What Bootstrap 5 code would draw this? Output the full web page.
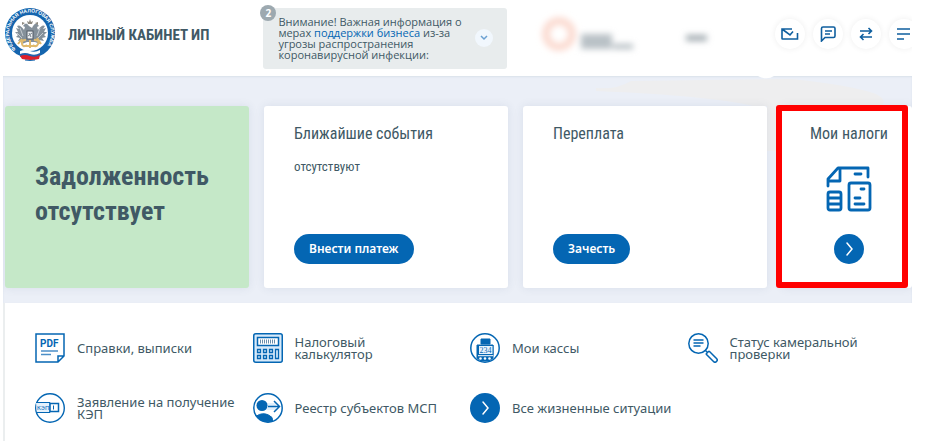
<!DOCTYPE html>
<html lang="ru">
<head>
<meta charset="utf-8">
<meta name="viewport" content="width=device-width, initial-scale=1">
<title>Личный кабинет ИП</title>
<link href="https://cdn.jsdelivr.net/npm/bootstrap@5.3.0/dist/css/bootstrap.min.css" rel="stylesheet">
<style>
  :root { --brand: #0466b3; --ink: #405965; --din: "Liberation Sans Narrow", "Roboto Condensed", Roboto, sans-serif; }
  body { font-family: "Noto Sans", "Open Sans", sans-serif; font-size: 13px; line-height: 12px; color: var(--ink); background: #fff; }
  svg { display: block; flex-shrink: 0; }
  .page-wrap { margin: 0 30px 0 3px; overflow-x: clip; }
  .top-bar { height: 76px; padding: 8px 0 0 2px; }
  .brand-link { color: var(--ink); font: bold 15px/20px var(--din); height: 53px; gap: 13px; }
  .notice { width: 244px; margin-left: 54px; padding: 8px 14px 9px 15px; background: #e8eced; border-radius: 3px; font-family: "Open Sans", sans-serif; font-size: 11px; line-height: 11px; }
  .notice a { color: var(--brand); }
  .notice-count { left: -3px; top: -3px; width: 16px; height: 16px; background: #9da9b0; font-size: 10px; line-height: 16px; }
  .notice-toggle { width: 18px; height: 18px; background: #f1f7fd; }
  .account { margin-left: 24px; }
  .tool-list { gap: 8px; margin-right: -7px; padding-top: 11px; }
  .tool-btn { width: 30px; height: 30px; background: #fff; box-shadow: 0 0 6px #00000012; }
  .summary { background: #ebeff7; padding: 30px 0 15px 2px; box-shadow: inset 0 1px 2px #d9e1ea; }
  .backdrop { left: 0; top: 0; width: 100%; height: 100%; }
  .summary-grid { grid-template-columns: 244fr 244fr 244fr 130fr; gap: 15px; }
  .tile { min-height: 182px; border: 0; border-radius: 3px; padding: 18px 30px 24px; color: var(--ink); box-shadow: 0 0 10px #3c50781a; }
  .tile h2 { font: 16px/20px var(--din); margin: 0; }
  .tile p { font: 13px/18px var(--din); margin: 14px 0 0; }
  .tile-debt { background: #c5e8c8; }
  .tile-debt h2 { font: bold 26px/35px var(--din); }
  .btn-pill { background: var(--brand); color: #fff; border: 0; border-radius: 15px; font-size: 12px; font-weight: 600; line-height: 18px; padding: 6px 15px; }
  .btn-pill:hover { background: #03569a; color: #fff; }
  .tile-tax { padding: 18px 0 24px 4px; }
  .tax-frame { left: -6px; right: 4px; top: -1px; bottom: 0; border: 6px solid #f00; border-radius: 3px; pointer-events: none; }
  .services { border-left: 2px solid #ebeeef; padding: 30px 7px 18px 30px; }
  .services ul { grid-template-columns: repeat(4, 1fr); row-gap: 30px; }
  .services a { color: var(--ink); gap: 12px; min-height: 30px; padding-right: 8px; }
</style>
<script src="https://cdn.jsdelivr.net/npm/bootstrap@5.3.0/dist/js/bootstrap.bundle.min.js"></script>
</head>
<body>
<div class="page-wrap">
  <header class="top-bar d-flex align-items-start">
    <a href="#" class="brand-link d-flex align-items-center text-decoration-none text-nowrap">
      <svg width="50" height="53" viewBox="0 0 50 53" role="img" aria-label="Федеральная налоговая служба">
        <defs><path id="ring" d="M11 41A21 21 0 1 1 41 39"/></defs>
        <circle cx="25" cy="25" r="25" fill="#1565ae"/>
        <circle cx="25" cy="25" r="18" fill="#fff"/>
        <text font-family="Liberation Sans, sans-serif" font-weight="700" font-size="5" fill="#fff"><textPath href="#ring">ФЕДЕРАЛЬНАЯ НАЛОГОВАЯ СЛУЖБА</textPath></text>
        <g fill="#84909a">
          <path d="M24 18q-3-5-6 0l2 1-1 3q-4-6-7-4l2 3-3-1 2 4-3 0 3 3-2 2 4 1-2 3 5-1-1 4 5-2h8l5 2-1-4 5 1-2-3 4-1-2-2 3-3-3 0 2-4-3 1 2-3q-3-2-7 4l-1-3 2-1q-3-5-6 0l-1 2z"/>
        </g>
        <path d="M15 20l3 8M12 25l5 5M35 20l-3 8M38 25l-5 5" stroke="#c4cbd1"/>
        <path d="M23 16l-1-3 2 1 1-3 1 3 2-1-1 3zM17 17l0-3 3 1zM33 17v-3l-3 1z" fill="#8e8a80"/>
        <rect x="22" y="23" width="6" height="8" fill="#edf0f3" stroke="#4f5965"/>
        <path d="M23 28l4-3M24 25l2 4" stroke="#78838d"/>
        <path d="M21 32q-5 0-4 4t5 1M29 32q6 0 4 4t-5 1M19 38h12M25 32v8M32 30l4 6M17 31l-4 5" fill="none" stroke="#e0ba6c" stroke-width="2"/>
        <path d="M15 43q5-2 10 0t10-1v5q-5 2-10 0t-10 1z" fill="#fff"/>
        <path d="M15 46q5-2 10 0t10-1v3q-5 2-10 0t-10 1z" fill="#2463ad"/>
        <path d="M15 48q5-2 10 0t10-1l-1 4q-8 2-17 0z" fill="#df202b"/>
        <path d="M20 52q5 1 10 0" stroke="#1565ae" fill="none"/>
      </svg>
      <span>ЛИЧНЫЙ КАБИНЕТ ИП</span>
    </a>
    <section class="notice position-relative d-flex align-items-center justify-content-between flex-shrink-0">
      <span class="notice-count position-absolute rounded-circle text-white text-center fw-bold">2</span>
      <div class="text-nowrap">Внимание! Важная информация о<br>мерах <a href="#" class="text-decoration-none">поддержки бизнеса</a> из-за<br>угрозы распространения<br>коронавирусной инфекции:</div>
      <button type="button" class="notice-toggle btn p-0 border-0 rounded-circle d-flex align-items-center justify-content-center flex-shrink-0" aria-label="Развернуть">
        <svg width="8" height="6" viewBox="0 0 8 6" fill="none" stroke="#6aa0d2" stroke-width="1.500"><path d="M1 1l3 3 3-3"/></svg>
      </button>
    </section>
    <svg class="account" width="190" height="55" viewBox="0 0 190 55" aria-hidden="true">
      <defs><filter id="soft" filterUnits="userSpaceOnUse" x="0" y="0" width="190" height="55"><feGaussianBlur stdDeviation="3"/></filter></defs>
      <g filter="url(#soft)">
        <circle cx="28" cy="26" r="13" fill="none" stroke="#fbdcd2" stroke-width="8"/>
        <path d="M50 26h31v15H50z" fill="#b9c1c6"/><path d="M82 36h20v5H82z" fill="#b4bcc1"/><path d="M155 27h21v6h-21z" fill="#a2abb1"/>
      </g>
    </svg>
    <nav class="tool-list d-flex ms-auto">
      <button type="button" class="tool-btn btn p-0 border-0 rounded-circle d-flex align-items-center justify-content-center flex-shrink-0" aria-label="Сообщения">
        <svg width="18" height="14" viewBox="0 0 18 14" fill="none" stroke="#0f5f9f" stroke-width="1.600"><path d="M11 2H1v9.500q0 .5.500.500h15V6M1 2l8 6 3-3.500"/></svg>
      </button>
      <button type="button" class="tool-btn btn p-0 border-0 rounded-circle d-flex align-items-center justify-content-center flex-shrink-0" aria-label="Обращения">
        <svg width="16" height="16" viewBox="0 0 16 16" fill="none" stroke="#0f5f9f" stroke-width="1.600"><path d="M1.500 15V2.500q0-1.500 1.500-1.500h10.500q1.500 0 1.500 1.500V10q0 1.500-1.500 1.500H5zM5 5h7M5 8h5"/></svg>
      </button>
      <button type="button" class="tool-btn btn p-0 border-0 rounded-circle d-flex align-items-center justify-content-center flex-shrink-0" aria-label="Переключить">
        <svg width="14" height="14" viewBox="0 0 14 14" fill="none" stroke="#0f5f9f" stroke-width="1.600"><path d="M1 4h11M9.500 1l3 3-3 3M13 10H2M4.500 7l-3 3 3 3"/></svg>
      </button>
      <button type="button" class="tool-btn btn p-0 border-0 rounded-circle d-flex align-items-center justify-content-center flex-shrink-0" aria-label="Меню">
        <svg width="18" height="12" viewBox="0 0 18 12" fill="none" stroke="#0f5f9f" stroke-width="1.600"><path d="M2 1h13M2 6h13M2 11h7"/></svg>
      </button>
    </nav>
  </header>

  <main>
    <section class="summary position-relative">
      <svg class="backdrop position-absolute" viewBox="0 0 909 227" preserveAspectRatio="none" aria-hidden="true">
        <path d="M593 12q20 2 35-7l160-2q60 6 85 15 12 6 5 12H750q-40-10-157-15z" fill="#eeeeef"/><path d="M764 30h10v45h-10z" fill="#eeeeef"/><path d="M755 0h16q-6 4-14 1z" fill="#fff"/>
      </svg>
      <div class="summary-grid d-grid position-relative">
        <article class="tile tile-debt card justify-content-center">
          <h2>Задолженность<br>отсутствует</h2>
        </article>
        <article class="tile card align-items-start">
          <h2>Ближайшие события</h2>
          <p>отсутствуют</p>
          <button type="button" class="btn btn-pill mt-auto">Внести платеж</button>
        </article>
        <article class="tile card align-items-start">
          <h2>Переплата</h2>
          <button type="button" class="btn btn-pill mt-auto">Зачесть</button>
        </article>
        <article class="tile tile-tax card align-items-center justify-content-between">
          <h2>Мои налоги</h2>
          <svg width="46" height="46" viewBox="0 0 46 46" fill="none" stroke="#0466b3" stroke-width="2.800" stroke-linecap="round" stroke-linejoin="round"><path d="M2 20v-7L12 2h30v9M14 2v13H3M29 8h6M4 26h9q2 0 2 2v14q0 2-2 2H4q-2 0-2-2V28q0-2 2-2zM2 32h13M2 38h13M25 17h17q2 0 2 2v23q0 2-2 2H25q-2 0-2-2V19q0-2 2-2zM35 23h3M29 32h5M29 38h9"/></svg>
          <a href="#" aria-label="Мои налоги"><svg width="30" height="30" viewBox="0 0 30 30" fill="none"><circle cx="15" cy="15" r="15" fill="#0466b3"/><path d="M13 9l5 6-5 6" stroke="#fff" stroke-width="1.500" stroke-linecap="round"/></svg></a>
          <span class="tax-frame position-absolute"></span>
        </article>
      </div>
    </section>

    <nav class="services" aria-label="Жизненные ситуации">
      <ul class="list-unstyled d-grid mb-0">
        <li><a href="#" class="d-flex align-items-center text-decoration-none">
          <svg width="30" height="30" viewBox="0 0 30 30" fill="none" stroke="#0466b3"><path d="M1 1h28v22l-6 6H1zM29 23h-6v6" stroke-width="1.500"/><text x="5" y="14" font-family="Roboto, sans-serif" font-weight="700" font-size="10" fill="#0466b3" stroke="none">PDF</text><path d="M6 18h17M6 21.500h10" stroke="#4c8fc7" stroke-width="1.500"/></svg>
          <span>Справки, выписки</span></a></li>
        <li><a href="#" class="d-flex align-items-center text-decoration-none">
          <svg width="30" height="30" viewBox="0 0 30 30" fill="none" stroke="#0466b3"><rect x=".750" y=".750" width="28.500" height="28.500" rx="2" fill="#d7eafa" stroke-width="1.500"/><path d="M4.500 4.500h21v8h-21z" fill="#fff" stroke-width="1.500"/><path d="M7.500 6.500v4M9.500 6.500v4M11.500 6.500v4M13.500 6.500v4M15.500 6.500v4M17.500 6.500v4M19.500 6.500v4M21.500 6.500v4" stroke="#6a8dab"/><path d="M4.500 16.500h3v3h-3zM10.500 16.500h3v3h-3zM16.500 16.500h3v3h-3zM4.500 22.500h3v3h-3zM10.500 22.500h3v3h-3zM16.500 22.500h3v3h-3zM22.500 16.500h3v9h-3z" stroke-width="1.300"/></svg>
          <span>Налоговый<br>калькулятор</span></a></li>
        <li><a href="#" class="d-flex align-items-center text-decoration-none">
          <svg width="30" height="30" viewBox="0 0 30 30" fill="none" stroke="#0466b3"><circle cx="15" cy="15" r="14.200" stroke-width="1.500"/><path d="M11 6h9v5h-9z" fill="#0466b3"/><path d="M7 12h16v13l-4 3h-8l-4-3z" fill="#0466b3"/><rect x="8.500" y="12.500" width="14.500" height="9" fill="#e8f3fc"/><text x="9.500" y="20" font-family="Liberation Serif, serif" font-size="8" fill="#0466b3" stroke="none">234</text><path d="M8 22.700h15" stroke="#fff"/><g fill="#fff" stroke="none"><circle cx="10.500" cy="25.500" r="1.300"/><circle cx="15" cy="25.500" r="1.300"/><circle cx="19.500" cy="25.500" r="1.300"/></g></svg>
          <span>Мои кассы</span></a></li>
        <li><a href="#" class="d-flex align-items-center text-decoration-none">
          <svg width="30" height="30" viewBox="0 0 30 30" fill="none" stroke="#0466b3" stroke-width="1.500"><circle cx="10.500" cy="10.500" r="9.700"/><path d="M5.500 7h10M5.500 10h10M5.500 13h7M17 17l3 3M18.500 20.500l2-2q.5-.5 1 0l7 7q1.500 1.500 0 3t-3 0l-7-7q-.5-.5 0-1z"/></svg>
          <span>Статус камеральной<br>проверки</span></a></li>
        <li><a href="#" class="d-flex align-items-center text-decoration-none">
          <svg width="30" height="30" viewBox="0 0 30 30" fill="none" stroke="#0466b3"><circle cx="15" cy="15" r="14.300" stroke-width="1.400"/><path d="M1 9.500h14v10H2" fill="#e4f1fc"/><path d="M15 10.500h8.500v8H15z" fill="#fff" stroke-width="1.500"/><path d="M18.500 12.500v4"/><text x="2" y="17" font-family="Roboto, sans-serif" font-size="6" fill="#0466b3" stroke="none">КЭП</text></svg>
          <span>Заявление на получение<br>КЭП</span></a></li>
        <li><a href="#" class="d-flex align-items-center text-decoration-none">
          <svg width="30" height="30" viewBox="0 0 30 30" fill="none" stroke="#0466b3"><circle cx="15" cy="15" r="14.200" fill="#fff" stroke-width="1.500"/><path d="M13 10h10v7H13z" fill="#e2f0fc" stroke="none"/><circle cx="9" cy="12.500" r="5.500" fill="#0466b3" stroke="none"/><path d="M3.500 23q6-4 12-1 5 2 4 6Q10 31 3.500 23z" fill="#0466b3"/><path d="M15 13.500h11M21 8l5.500 5.500L21 19" stroke-width="1.500"/></svg>
          <span>Реестр субъектов МСП</span></a></li>
        <li><a href="#" class="d-flex align-items-center text-decoration-none">
          <svg width="30" height="30" viewBox="0 0 30 30" fill="none"><circle cx="15" cy="15" r="15" fill="#0466b3"/><path d="M13 9l5 6-5 6" stroke="#fff" stroke-width="1.500" stroke-linecap="round"/></svg>
          <span>Все жизненные ситуации</span></a></li>
      </ul>
    </nav>
  </main>
</div>
</body>
</html>
